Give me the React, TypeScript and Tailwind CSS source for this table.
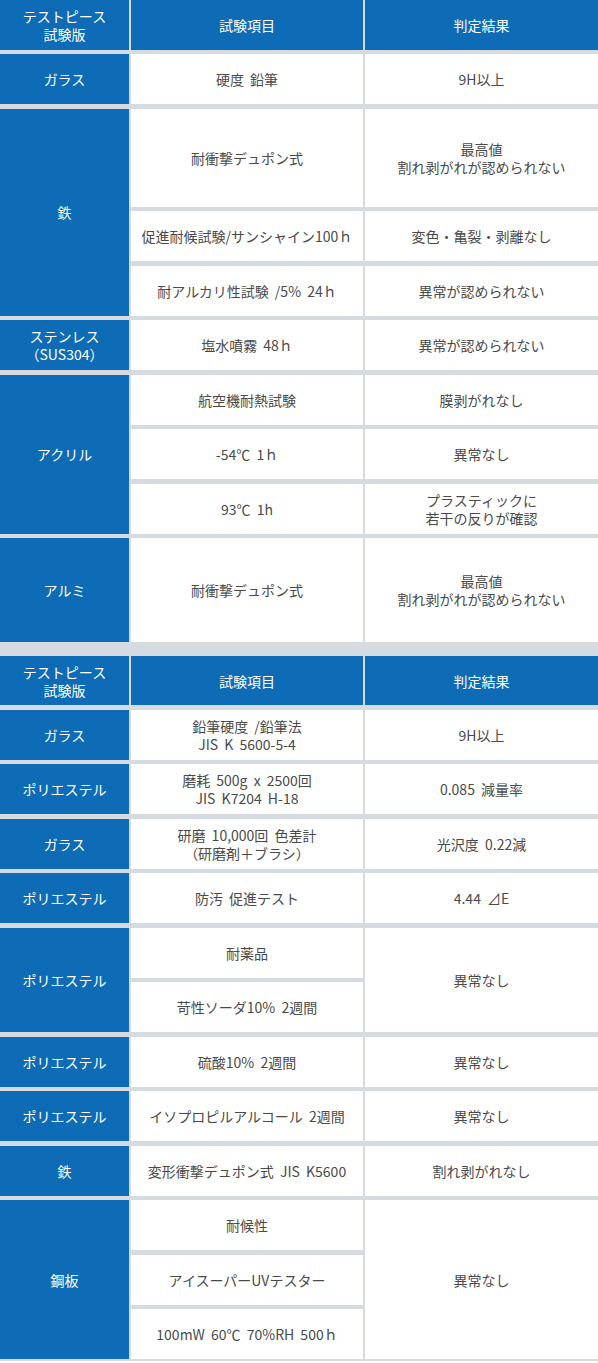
import React, { FC, ReactNode } from 'react';

type CellProps = {
  children?: ReactNode;
  head?: boolean;
  span?: string;
};

const Cell: FC<CellProps> = ({ children, head, span }) => (
  <div
    className={[
      'flex items-center justify-center text-center px-2 text-[14px] leading-[18px] [word-spacing:3px]',
      head ? 'bg-[#0d6cb5] text-white' : 'bg-white text-[#4a4a4a]',
      span ?? '',
    ].join(' ')}
  >
    <div>{children}</div>
  </div>
);

const Header: FC = () => (
  <>
    <Cell head>
      テストピース
      <br />
      試験版
    </Cell>
    <Cell head>試験項目</Cell>
    <Cell head>判定結果</Cell>
  </>
);

export default function App() {
  return (
    <div
      className="w-[598px] bg-[#d5dbe0] flex flex-col gap-[14px] pb-[2px]"
      style={{ fontFamily: '"Noto Sans CJK JP", "Noto Sans", sans-serif' }}
    >
      <div className="grid grid-cols-[129px_232px_1fr] grid-rows-[49.5px_50px_98px_50px_50px_50px_50px_50px_50px_104px] gap-x-[2px] gap-y-[4.5px]">
        <Header />

        <Cell head>ガラス</Cell>
        <Cell>硬度 鉛筆</Cell>
        <Cell>9H以上</Cell>

        <Cell head span="row-span-3">鉄</Cell>
        <Cell>耐衝撃デュポン式</Cell>
        <Cell>
          最高値
          <br />
          割れ剥がれが認められない
        </Cell>
        <Cell>促進耐候試験/サンシャイン100ｈ</Cell>
        <Cell>変色・亀裂・剥離なし</Cell>
        <Cell>耐アルカリ性試験 /5% 24ｈ</Cell>
        <Cell>異常が認められない</Cell>

        <Cell head>
          ステンレス
          <br />
          （SUS304）
        </Cell>
        <Cell>塩水噴霧 48ｈ</Cell>
        <Cell>異常が認められない</Cell>

        <Cell head span="row-span-3">アクリル</Cell>
        <Cell>航空機耐熱試験</Cell>
        <Cell>膜剥がれなし</Cell>
        <Cell>-54℃ 1ｈ</Cell>
        <Cell>異常なし</Cell>
        <Cell>93℃ 1h</Cell>
        <Cell>
          プラスティックに
          <br />
          若干の反りが確認
        </Cell>

        <Cell head>アルミ</Cell>
        <Cell>耐衝撃デュポン式</Cell>
        <Cell>
          最高値
          <br />
          割れ剥がれが認められない
        </Cell>
      </div>

      <div className="grid grid-cols-[129px_232px_1fr] grid-rows-[49px_repeat(12,50px)] gap-x-[2px] gap-y-[4.5px]">
        <Header />

        <Cell head>ガラス</Cell>
        <Cell>
          鉛筆硬度 /鉛筆法
          <br />
          JIS K 5600-5-4
        </Cell>
        <Cell>9H以上</Cell>

        <Cell head>ポリエステル</Cell>
        <Cell>
          磨耗 500g x 2500回
          <br />
          JIS K7204 H-18
        </Cell>
        <Cell>0.085 減量率</Cell>

        <Cell head>ガラス</Cell>
        <Cell>
          研磨 10,000回 色差計
          <br />
          （研磨剤＋ブラシ）
        </Cell>
        <Cell>光沢度 0.22減</Cell>

        <Cell head>ポリエステル</Cell>
        <Cell>防汚 促進テスト</Cell>
        <Cell>4.44 ⊿E</Cell>

        <Cell head span="row-span-2">ポリエステル</Cell>
        <Cell>耐薬品</Cell>
        <Cell span="row-span-2">異常なし</Cell>
        <Cell>苛性ソーダ10% 2週間</Cell>

        <Cell head>ポリエステル</Cell>
        <Cell>硫酸10% 2週間</Cell>
        <Cell>異常なし</Cell>

        <Cell head>ポリエステル</Cell>
        <Cell>イソプロピルアルコール 2週間</Cell>
        <Cell>異常なし</Cell>

        <Cell head>鉄</Cell>
        <Cell>変形衝撃デュポン式 JIS K5600</Cell>
        <Cell>割れ剥がれなし</Cell>

        <Cell head span="row-span-3">鋼板</Cell>
        <Cell>耐候性</Cell>
        <Cell span="row-span-3">異常なし</Cell>
        <Cell>アイスーパーUVテスター</Cell>
        <Cell>100mW 60℃ 70%RH 500ｈ</Cell>
      </div>
    </div>
  );
}
